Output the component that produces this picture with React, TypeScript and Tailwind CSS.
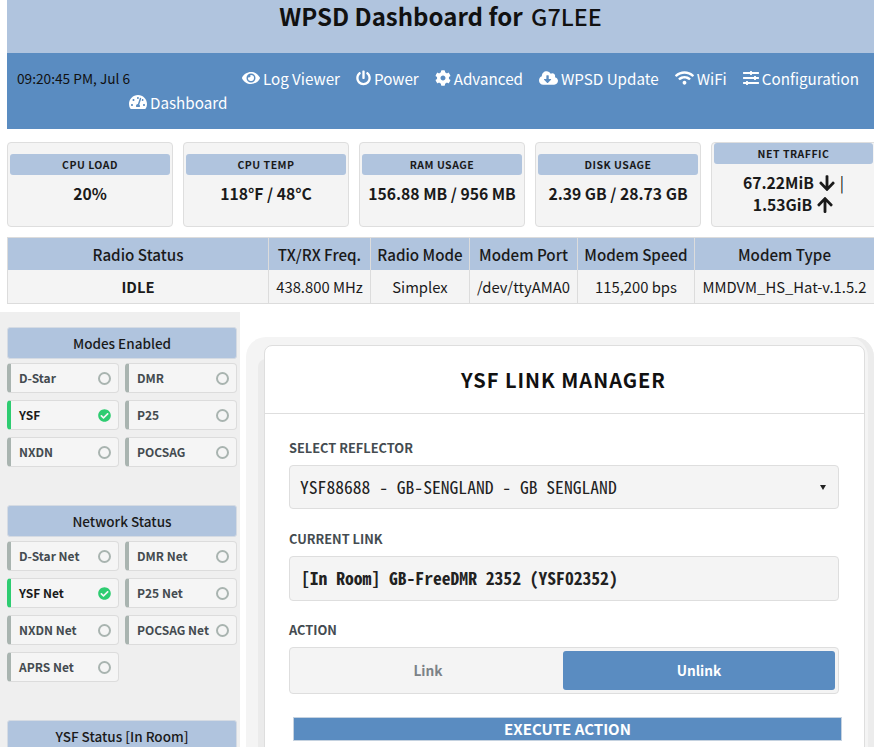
import { FaArrowDown, FaArrowUp, FaCheckCircle, FaCloudDownloadAlt, FaCog, FaEye, FaPowerOff, FaSlidersH, FaTachometerAlt, FaWifi } from "react-icons/fa";

const navItems = [
  { name: "Log Viewer", icon: FaEye, size: "h-4 w-[18px]" },
  { name: "Power", icon: FaPowerOff, size: "h-4 w-[15px]" },
  { name: "Advanced", icon: FaCog, size: "h-4 w-4" },
  { name: "WPSD Update", icon: FaCloudDownloadAlt, size: "h-4 w-[19px]" },
  { name: "WiFi", icon: FaWifi, size: "h-4 w-[19px]" },
  { name: "Configuration", icon: FaSlidersH, size: "h-4 w-4" },
];

const stats = [
  { label: "CPU LOAD", value: "20%" },
  { label: "CPU TEMP", value: "118°F / 48°C" },
  { label: "RAM USAGE", value: "156.88 MB / 956 MB" },
  { label: "DISK USAGE", value: "2.39 GB / 28.73 GB" },
];

const radioHead = ["Radio Status", "TX/RX Freq.", "Radio Mode", "Modem Port", "Modem Speed", "Modem Type"];
const radioRow = ["IDLE", "438.800 MHz", "Simplex", "/dev/ttyAMA0", "115,200 bps", "MMDVM_HS_Hat-v.1.5.2"];

const modes = [
  { name: "D-Star" },
  { name: "DMR" },
  { name: "YSF", on: true },
  { name: "P25" },
  { name: "NXDN" },
  { name: "POCSAG" },
];

const nets = [
  { name: "D-Star Net" },
  { name: "DMR Net" },
  { name: "YSF Net", on: true },
  { name: "P25 Net" },
  { name: "NXDN Net" },
  { name: "POCSAG Net" },
  { name: "APRS Net" },
];

function PanelHead({ title }: { title: string }) {
  return (
    <div className="flex h-8 items-center justify-center rounded-[3px] border border-[#d5dbe3] bg-[#b0c4de] text-[13.5px] font-medium text-[#1a1a1a]">
      {title}
    </div>
  );
}

function ModeGrid({ items }: { items: { name: string; on?: boolean }[] }) {
  return (
    <div className="mt-1 grid grid-cols-2 gap-x-[6px] gap-y-[7px]">
      {items.map((item) => (
        <div
          key={item.name}
          className={`flex h-[30px] items-center justify-between rounded-[4px] border border-l-4 border-[#dcdcdc] bg-[#f5f5f5] pl-2 pr-[7px] text-[12px] font-semibold ${
            item.on ? "border-l-[#2ecc71] text-[#1a1a1a]" : "border-l-[#a9b4b0] text-[#444b50]"
          }`}
        >
          <span className="whitespace-nowrap">{item.name}</span>
          {item.on ? (
            <FaCheckCircle className="h-[13px] w-[13px] text-[#2ecc71]" />
          ) : (
            <span className="h-[13px] w-[13px] rounded-full border-2 border-[#a9b4b0]" />
          )}
        </div>
      ))}
    </div>
  );
}

export default function App() {
  return (
    <div className="h-[747px] w-[874px] overflow-hidden bg-white font-['Noto_Sans_CJK_SC','Noto_Sans',sans-serif] text-[#1a1a1a]">
      <div className="pl-[7px]">
        {/* Title */}
        <div className="flex h-[53px] justify-center bg-[#b0c4de] pt-[1px]">
          <h1 className="text-[24px] leading-[30px] font-semibold text-[#111]">
            WPSD Dashboard for <span className="ml-[3px] text-[23.3px] font-medium">G7LEE</span>
          </h1>
        </div>

        {/* Nav */}
        <div className="h-[76px] bg-[#5a8cc1] pt-[13px] pl-[10px] pr-[15px] text-[15.2px] text-white">
          <div className="flex h-6 items-center justify-between">
            <span className="text-[13.7px] text-[#111]">09:20:45 PM, Jul 6</span>
            <nav className="flex items-center gap-4">
              {navItems.map((item) => (
                <a key={item.name} className="flex items-center gap-[3px]">
                  <item.icon className={item.size} />
                  {item.name}
                </a>
              ))}
            </nav>
          </div>
          <a className="ml-[112px] flex h-6 items-center gap-[3px]">
            <FaTachometerAlt className="h-4 w-[18px]" />
            Dashboard
          </a>
        </div>

        {/* Stats */}
        <div className="mt-[13px] flex gap-[10px]">
          {stats.map((s) => (
            <div key={s.label} className="h-[85px] w-[166px] shrink-0 rounded-[4px] border border-[#dedede] bg-[#f4f4f4] px-[2px] pt-[11px]">
              <div className="flex h-[21px] items-center justify-center rounded-[3px] bg-[#b0c4de] text-[10.5px] font-semibold tracking-[0.5px]">
                {s.label}
              </div>
              <div className="mt-[7px] text-center text-[15.7px] leading-6 font-bold whitespace-nowrap">{s.value}</div>
            </div>
          ))}
          <div className="h-[85px] w-[170px] shrink-0 rounded-[4px] border border-[#dedede] bg-[#f4f4f4] pl-[2px] pr-[7px]">
            <div className="flex h-[21px] items-center justify-center rounded-[3px] bg-[#b0c4de] text-[10.5px] font-semibold tracking-[0.5px]">
              NET TRAFFIC
            </div>
            <div className="mt-[8px] text-center text-[15.7px] leading-[22px] font-bold">
              <div className="flex items-center justify-center gap-[4px]">
                67.22MiB <FaArrowDown className="h-[18px] w-[18px]" /> <span className="font-normal text-[#111]">|</span>
              </div>
              <div className="flex items-center justify-center gap-[4px]">
                1.53GiB <FaArrowUp className="h-[18px] w-[18px]" />
              </div>
            </div>
          </div>
        </div>

        {/* Radio table */}
        <div className="mt-[10px] grid grid-cols-[260px_102px_99px_108px_117px_180px] border border-[#dcdcdc]">
          {radioHead.map((h, i) => (
            <div key={h} className={`flex h-[32px] items-center justify-center bg-[#b0c4de] text-[15.2px] font-medium ${i > 0 ? "border-l border-[#dcdcdc]" : ""}`}>
              {h}
            </div>
          ))}
          {radioRow.map((c, i) => (
            <div key={c} className={`flex h-[33px] items-center justify-center bg-[#f4f4f4] pt-[1px] text-[14.8px] whitespace-nowrap ${i > 0 ? "border-l border-[#dcdcdc]" : "font-bold"}`}>
              {c}
            </div>
          ))}
        </div>
      </div>

      <div className="mt-[8px] flex">
        {/* Sidebar */}
        <aside className="h-[500px] w-[240px] shrink-0 bg-[#efefef] pt-[15px] pr-[3px] pl-[7px]">
          <PanelHead title="Modes Enabled" />
          <ModeGrid items={modes} />
          <div className="mt-[38px]">
            <PanelHead title="Network Status" />
            <ModeGrid items={nets} />
          </div>
          <div className="mt-[38px]">
            <PanelHead title="YSF Status [In Room]" />
          </div>
        </aside>

        {/* Link manager */}
        <main className="mt-[25px] ml-[6px] min-w-0 flex-1 rounded-[20px] bg-[#f4f4f4] pt-[8px] pr-[9px] pl-[18px] shadow-[inset_-6px_0_0_#ececec]">
          <div className="h-[500px] rounded-[8px] border border-[#dedede] bg-white shadow-[-6px_14px_0_#ebebeb]">
            <h2 className="flex h-[68px] items-center justify-center border-b border-[#dedede] pr-[2px] text-[20px] font-bold tracking-[1px] text-[#111]">
              YSF LINK MANAGER
            </h2>
            <div className="pt-[25px] pr-[25px] pl-[24px]">
              <div className="text-[12.8px] leading-[18px] font-semibold text-[#444b50]">SELECT REFLECTOR</div>
              <div className="mt-[8px] flex h-[44px] items-center justify-between rounded-[4px] border border-[#dedede] bg-[#f4f4f4] pr-[12px] pl-[10px] font-['Noto_Sans_Mono_CJK_SC','DejaVu_Sans_Mono',monospace] text-[17.6px] text-[#222]">
                YSF88688 - GB-SENGLAND - GB SENGLAND
                <span className="h-0 w-0 border-x-[3.5px] border-t-[5px] border-x-transparent border-t-[#222]" />
              </div>
              <div className="mt-[21px] text-[12.8px] leading-[18px] font-semibold text-[#444b50]">CURRENT LINK</div>
              <div className="mt-[8px] flex h-[45px] items-center rounded-[4px] border border-[#dedede] bg-[#f4f4f4] pl-[11px] font-['Noto_Sans_Mono_CJK_SC','DejaVu_Sans_Mono',monospace] text-[17.6px] font-bold text-[#222]">
                [In Room] GB-FreeDMR 2352 (YSF02352)
              </div>
              <div className="mt-[20px] text-[12.8px] leading-[18px] font-semibold text-[#444b50]">ACTION</div>
              <div className="mt-[8px] flex h-[47px] rounded-[4px] border border-[#dedede] bg-[#f4f4f4] py-[3px] pr-[3px] pl-[3px] text-[13.7px] font-semibold">
                <div className="flex flex-1 items-center justify-center text-[#7c8287]">Link</div>
                <div className="flex w-[272px] items-center justify-center rounded-[3px] bg-[#5a8cc1] text-white">Unlink</div>
              </div>
              <button className="mt-[23px] ml-[4px] flex h-[24px] w-[549px] shrink-0 items-center justify-center border border-[#c5d2e0] bg-[#5a8cc1] text-[15px] font-bold text-white">
                EXECUTE ACTION
              </button>
            </div>
          </div>
        </main>
      </div>
    </div>
  );
}
